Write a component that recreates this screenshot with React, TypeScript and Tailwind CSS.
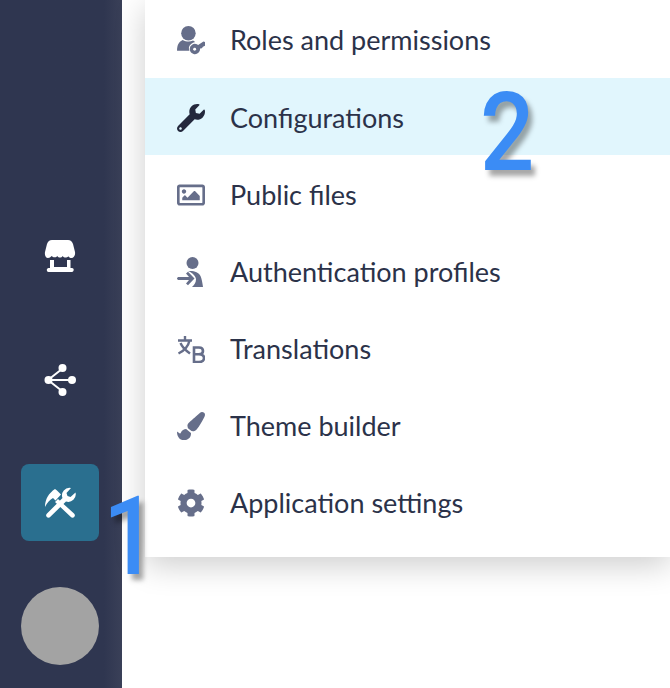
import { FaCog, FaPaintBrush, FaRegImage, FaWrench } from "react-icons/fa";

function StoreIcon() {
  return (
    <svg viewBox="0 0 32 33" className="w-8 h-[33px]" fill="#fff">
      <path d="M8 0h16c2.500 0 4 1.500 5 4l2 8c.5 3-1 6-3.500 6-1.500 0-2.500-.8-3.200-1.800-.8 1-1.800 1.300-2.800 1.300s-2.200-.5-2.800-1.500c-.7 1-1.600 1.500-2.700 1.500s-2-.5-2.700-1.500c-.7 1-1.700 1.500-2.800 1.300s-2-.4-2.800-1.300C6.500 17.200 5.500 18 4 18 1.500 18 .5 15 1 12l2-8C4 1.500 5.500 0 8 0z" />
      <path d="M6 20h4v7h13v-7h3.500v8H28c1 0 1.700.8 1.700 1.800S29 32 28 32H4.500c-1 0-1.700-1-1.700-2s.7-2 1.700-2H6z" />
    </svg>
  );
}

function ShareIcon() {
  return (
    <svg viewBox="0 0 32 32" className="w-8 h-8" fill="#fff" stroke="#fff" strokeWidth="2">
      <path d="M4 16h24M4 16 L18 5M4 16 L18 27" fill="none" />
      <circle cx="4.500" cy="16" r="4" stroke="none" />
      <circle cx="18.500" cy="4" r="4" stroke="none" />
      <circle cx="28" cy="16" r="4" stroke="none" />
      <circle cx="18.500" cy="28" r="4" stroke="none" />
    </svg>
  );
}

function ToolsIcon() {
  return (
    <svg viewBox="0 0 32 32" className="w-8 h-8" fill="#fff">
      <path d="M1 20C1 12 5 6 11 2l2 1.500 4 4-5.500 6-2.500-2.500c-3 1.500-6 4.500-8 9z" />
      <path d="M11 15l3-3 16 14.500c1.200 1.200 1.200 2.400.2 3.400s-2.400 1-3.600-.2z" />
      <path d="M27 1a7.500 7.500 0 0 0-8.500 10L3 26.500c-1.200 1.200-1.200 2.400-.2 3.400s2.400 1 3.600-.2L22 14.500a7.500 7.500 0 0 0 9.500-9l-5 4.500-3-1-1-3z" />
    </svg>
  );
}

function RolesIcon() {
  return (
    <svg viewBox="0 0 28 28" className="w-[29px] h-[29px]" fill="#666e8a">
      <circle cx="12" cy="7" r="7" />
      <path d="M1 24c0-6 2-9 5.500-10.500 3.500 2 7 2 10 .5l2 1.500c-3 .8-5.500 3-6 5-.2 1.300 0 2.500.5 3.500z" />
      <path d="M15.500 18a5 5 0 1 1 1.500 9 5 5 0 0 1-1.500-9zM21 18.500l5.500-3.500 1.500.5v3.500l-2 1-1 1.500-3.500.5z" />
      <circle cx="18" cy="22.500" r="1.400" fill="#fff" />
    </svg>
  );
}

function AuthIcon() {
  return (
    <svg viewBox="0 0 28 30" className="w-7 h-[30px]" fill="#666e8a">
      <circle cx="15.500" cy="6" r="6" />
      <path d="M11 14c6-.5 10.500 1 12.500 5 1.200 2.500 2 7 2.500 11H15c2-2 4-4.500 4-7.500 0-3-3-6.500-8-8.500z" />
      <path d="M2 20h10l-3-3.500 2-1.800 6.500 6.800-6.500 6.800-2-1.800 3-3.500H2c-1.200 0-2-.6-2-1.500s.8-1.500 2-1.500z" />
    </svg>
  );
}

function TranslateIcon() {
  return (
    <svg viewBox="0 0 28 28" className="w-7 h-7" fill="none" stroke="#666e8a">
      <path d="M1 5.500h14M8 1v4.500M12.500 5.500c-1 5-5 10-11 13M3.500 8c2 5 6 8 9.500 10.500" strokeWidth="2.400" />
      <path d="M17 27V12.500h5c2.700 0 4 1.200 4 3.400s-1.500 3.200-4 3.300c3 .1 5 1.400 5 3.800 0 2.700-2 4-5 4z M17 19.200h5" strokeWidth="2.600" />
    </svg>
  );
}

function MenuRow({ icon, label, active, first }: { icon: React.ReactNode; label: string; active?: boolean; first?: boolean }) {
  return (
    <div className={`flex items-center ${first ? "h-[78px] pt-[2px]" : "h-[77px] pt-[3px]"} ${active ? "bg-[#e1f6fd]" : ""}`}>
      <div className="w-[85px] flex justify-center pl-[6px] text-[#666e8a]">{icon}</div>
      <span className="text-[27px] text-[#2b3249]">{label}</span>
    </div>
  );
}

export default function App() {
  return (
    <div className="relative w-[670px] h-[688px] overflow-hidden bg-white flex font-['Lato',sans-serif]">
      <div className="w-[122px] h-full pr-[2px] bg-gradient-to-r from-[#2f3650] from-85% to-[#3a4058] flex flex-col items-center justify-end gap-[46px] pb-[23px] shrink-0">
        <div className="w-[78px] h-[78px] pt-[3px] flex items-center justify-center">
          <StoreIcon />
        </div>
        <div className="w-[78px] h-[78px] pt-[2px] flex items-center justify-center">
          <ShareIcon />
        </div>
        <div className="w-[78px] h-[77px] rounded-lg bg-[#2a6f8f] flex items-center justify-center">
          <ToolsIcon />
        </div>
        <div className="w-[78px] h-[78px] rounded-full bg-[#a3a3a3]" />
      </div>

      <div className="ml-[23px] flex-1 h-[557px] pb-[17px] bg-white shadow-[0_8px_30px_rgba(0,0,0,0.2)]">
        <MenuRow first icon={<RolesIcon />} label="Roles and permissions" />
        <MenuRow active icon={<FaWrench className="text-[28px] text-[#23283c]" />} label="Configurations" />
        <MenuRow icon={<FaRegImage className="text-[28px]" />} label="Public files" />
        <MenuRow icon={<AuthIcon />} label="Authentication profiles" />
        <MenuRow icon={<TranslateIcon />} label="Translations" />
        <MenuRow icon={<FaPaintBrush className="text-[28px]" />} label="Theme builder" />
        <MenuRow icon={<FaCog className="text-[28px]" />} label="Application settings" />
      </div>

      <span className="absolute left-[103px] top-[462px] text-[110px] leading-[150px] font-medium scale-x-[.87] origin-left text-[#3b8cf5] font-['Roboto',sans-serif] [text-shadow:5px_6px_6px_rgba(0,0,0,0.35)]">
        1
      </span>
      <span className="absolute left-[480px] top-[58px] text-[110px] leading-[150px] font-medium scale-x-[.87] origin-left text-[#3b8cf5] font-['Roboto',sans-serif] [text-shadow:5px_6px_6px_rgba(0,0,0,0.35)]">
        2
      </span>
    </div>
  );
}
